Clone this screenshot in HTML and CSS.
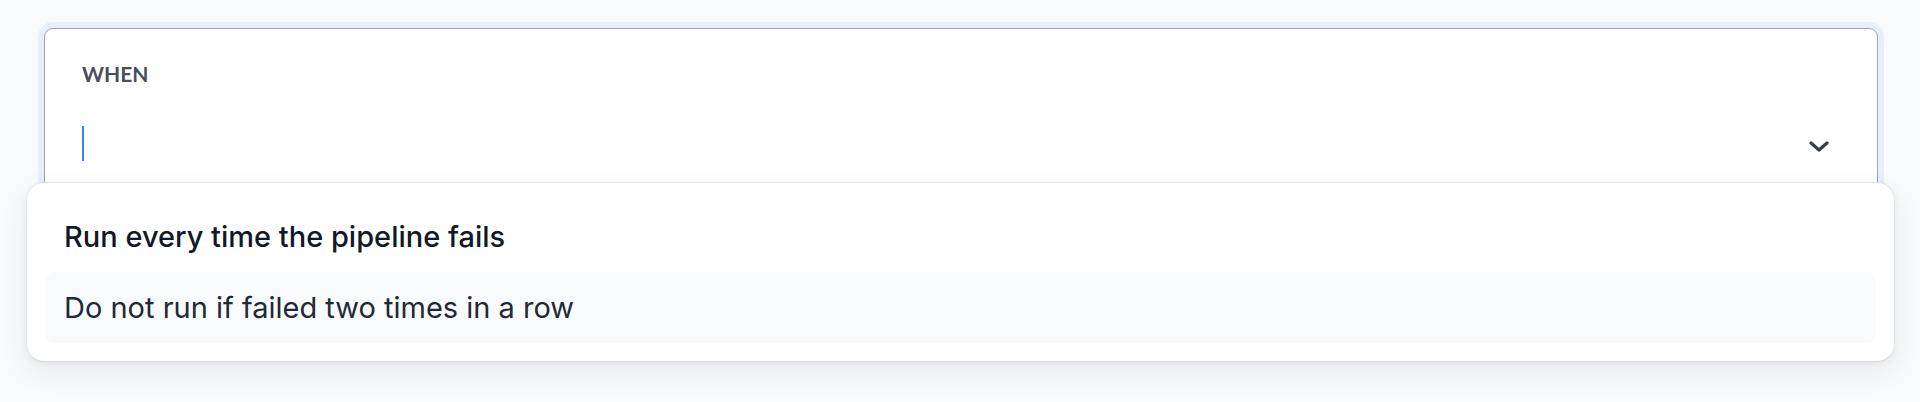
FILE: index.html
```html
<!DOCTYPE html>
<html lang="en">
<head>
  <meta charset="UTF-8">
  <meta name="viewport" content="width=device-width, initial-scale=1.0">
  <title>Trigger condition</title>
  <link rel="stylesheet" href="styles.css">
</head>
<body>
  <div class="page">
    <div class="field">
      <div class="field-box">
        <label class="field-label" for="when">WHEN</label>
        <div class="field-row">
          <span class="caret"></span>
          <svg class="chevron" width="22" height="12" viewBox="0 0 22 12">
            <path d="M3 3l8 7 8-7" fill="none" stroke="#3a3f46" stroke-width="3.2" stroke-linecap="round" stroke-linejoin="round"/>
          </svg>
        </div>
      </div>

      <ul class="menu">
        <li class="option selected">Run every time the pipeline fails</li>
        <li class="option active">Do not run if failed two times in a row</li>
      </ul>
    </div>
  </div>
</body>
</html>
```

FILE: styles.css
```css
body {
  margin: 0;
  background: #f9fafb;
  font-family: Inter, 'Noto Sans', sans-serif;
  height: 402px;
  overflow: hidden;
}
.page {
  padding: 28px 42px 0 44px;
}
.field {
  position: relative;
}
.field-box {
  background: #fff;
  border: 1px solid #9ca3af;
  border-radius: 9px;
  box-shadow: 0 0 0 6px #e8eefc;
  padding: 32px 47px 0 37px;
  height: 170px;
  box-sizing: border-box;
}
.field-label {
  display: block;
  font-family: Lato, sans-serif;
  font-weight: bold;
  font-size: 21px;
  line-height: 26px;
  color: #4a4f57;
}
.field-row {
  margin-top: 39px;
  height: 35px;
  display: flex;
  align-items: center;
  justify-content: space-between;
}
.caret {
  width: 2px;
  height: 35px;
  background: #3b82f6;
}
.chevron {
  margin-top: 5px;
}
.menu {
  position: absolute;
  top: 154px;
  left: -18px;
  right: -17px;
  margin: 0;
  padding: 18px;
  list-style: none;
  background: #fff;
  border: 1px solid #e3e5e8;
  border-bottom-color: #d8dbdf;
  border-radius: 18px;
  box-shadow: 0 10px 30px rgba(17, 24, 39, 0.07), 0 2px 6px rgba(17, 24, 39, 0.05);
}
.option {
  height: 71px;
  display: flex;
  align-items: center;
  padding-left: 19px;
  border-radius: 9px;
  font-size: 29px;
  color: #1f2937;
}
.option.selected {
  font-weight: 500;
  color: #111827;
}
.option.active {
  background: #f9fafc;
}
```
